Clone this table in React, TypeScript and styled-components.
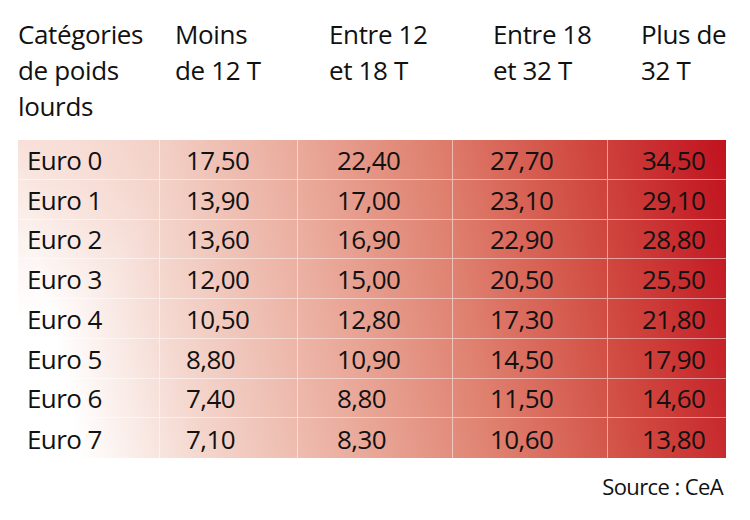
import React from "react";
import styled, { createGlobalStyle } from "styled-components";

const GlobalStyle = createGlobalStyle`
  html, body { margin: 0; padding: 0; background: #ffffff; }
  body { font-family: "Open Sans", "Noto Sans", sans-serif; color: #111111; }
`;

const COLS = "142px 138px 155px 155px 118px";

const Page = styled.div`
  width: 750px;
  height: 520px;
  box-sizing: border-box;
  padding: 16px 0 0 18px;
  font-family: "Open Sans", "Noto Sans", sans-serif;
  color: #111111;
`;

const HeaderRow = styled.div`
  display: grid;
  grid-template-columns: ${COLS};
  width: 708px;
`;

const HeadCell = styled.div<{ $pad: number }>`
  padding-left: ${(p) => p.$pad}px;
  font-size: 26px;
  line-height: 36px;
  letter-spacing: -0.35px;
  white-space: nowrap;
`;

const Table = styled.div`
  margin-top: 16px;
  width: 708px;
  height: 318px;
  display: grid;
  grid-template-columns: ${COLS};
  grid-template-rows: repeat(8, 1fr);
  background:
    radial-gradient(ellipse 140px 180px at 0% 0%, rgba(236, 170, 150, 0.35), rgba(236, 170, 150, 0)),
    linear-gradient(
      78deg,
      #ffffff 0%,
      #ffffff 8%,
      #f4d6cd 24%,
      #eaab9c 44%,
      #df806f 62%,
      #d14c42 80%,
      #c1121f 100%
    );
`;

const Cell = styled.div<{ $pad: number; $lastCol: boolean; $lastRow: boolean }>`
  display: flex;
  align-items: center;
  padding-left: ${(p) => p.$pad}px;
  padding-top: 1px;
  box-sizing: border-box;
  font-size: 26px;
  line-height: 26px;
  letter-spacing: -0.6px;
  white-space: nowrap;
  border-right: ${(p) => (p.$lastCol ? "none" : "1px solid rgba(255,255,255,0.5)")};
  border-bottom: ${(p) => (p.$lastRow ? "none" : "1px solid rgba(255,255,255,0.5)")};
`;

const Source = styled.div`
  width: 705px;
  margin-top: 13px;
  text-align: right;
  font-size: 22px;
  line-height: 30px;
  letter-spacing: -0.6px;
`;

const headers: React.ReactNode[] = [
  <>Catégories<br />de poids<br />lourds</>,
  <>Moins<br />de 12 T</>,
  <>Entre 12<br />et 18 T</>,
  <>Entre 18<br />et 32 T</>,
  <>Plus de<br />32 T</>,
];
const headPads = [0, 15, 31, 40, 33];
const cellPads = [9, 26, 39, 37, 34];

const rows: string[][] = [
  ["Euro 0", "17,50", "22,40", "27,70", "34,50"],
  ["Euro 1", "13,90", "17,00", "23,10", "29,10"],
  ["Euro 2", "13,60", "16,90", "22,90", "28,80"],
  ["Euro 3", "12,00", "15,00", "20,50", "25,50"],
  ["Euro 4", "10,50", "12,80", "17,30", "21,80"],
  ["Euro 5", "8,80", "10,90", "14,50", "17,90"],
  ["Euro 6", "7,40", "8,80", "11,50", "14,60"],
  ["Euro 7", "7,10", "8,30", "10,60", "13,80"],
];

export default function App() {
  return (
    <>
      <GlobalStyle />
      <Page>
        <HeaderRow>
          {headers.map((h, i) => (
            <HeadCell key={i} $pad={headPads[i]}>
              {h}
            </HeadCell>
          ))}
        </HeaderRow>
        <Table>
          {rows.map((r, ri) =>
            r.map((v, ci) => (
              <Cell
                key={`${ri}-${ci}`}
                $pad={cellPads[ci]}
                $lastCol={ci === r.length - 1}
                $lastRow={ri === rows.length - 1}
              >
                {v}
              </Cell>
            ))
          )}
        </Table>
        <Source>Source : CeA</Source>
      </Page>
    </>
  );
}
